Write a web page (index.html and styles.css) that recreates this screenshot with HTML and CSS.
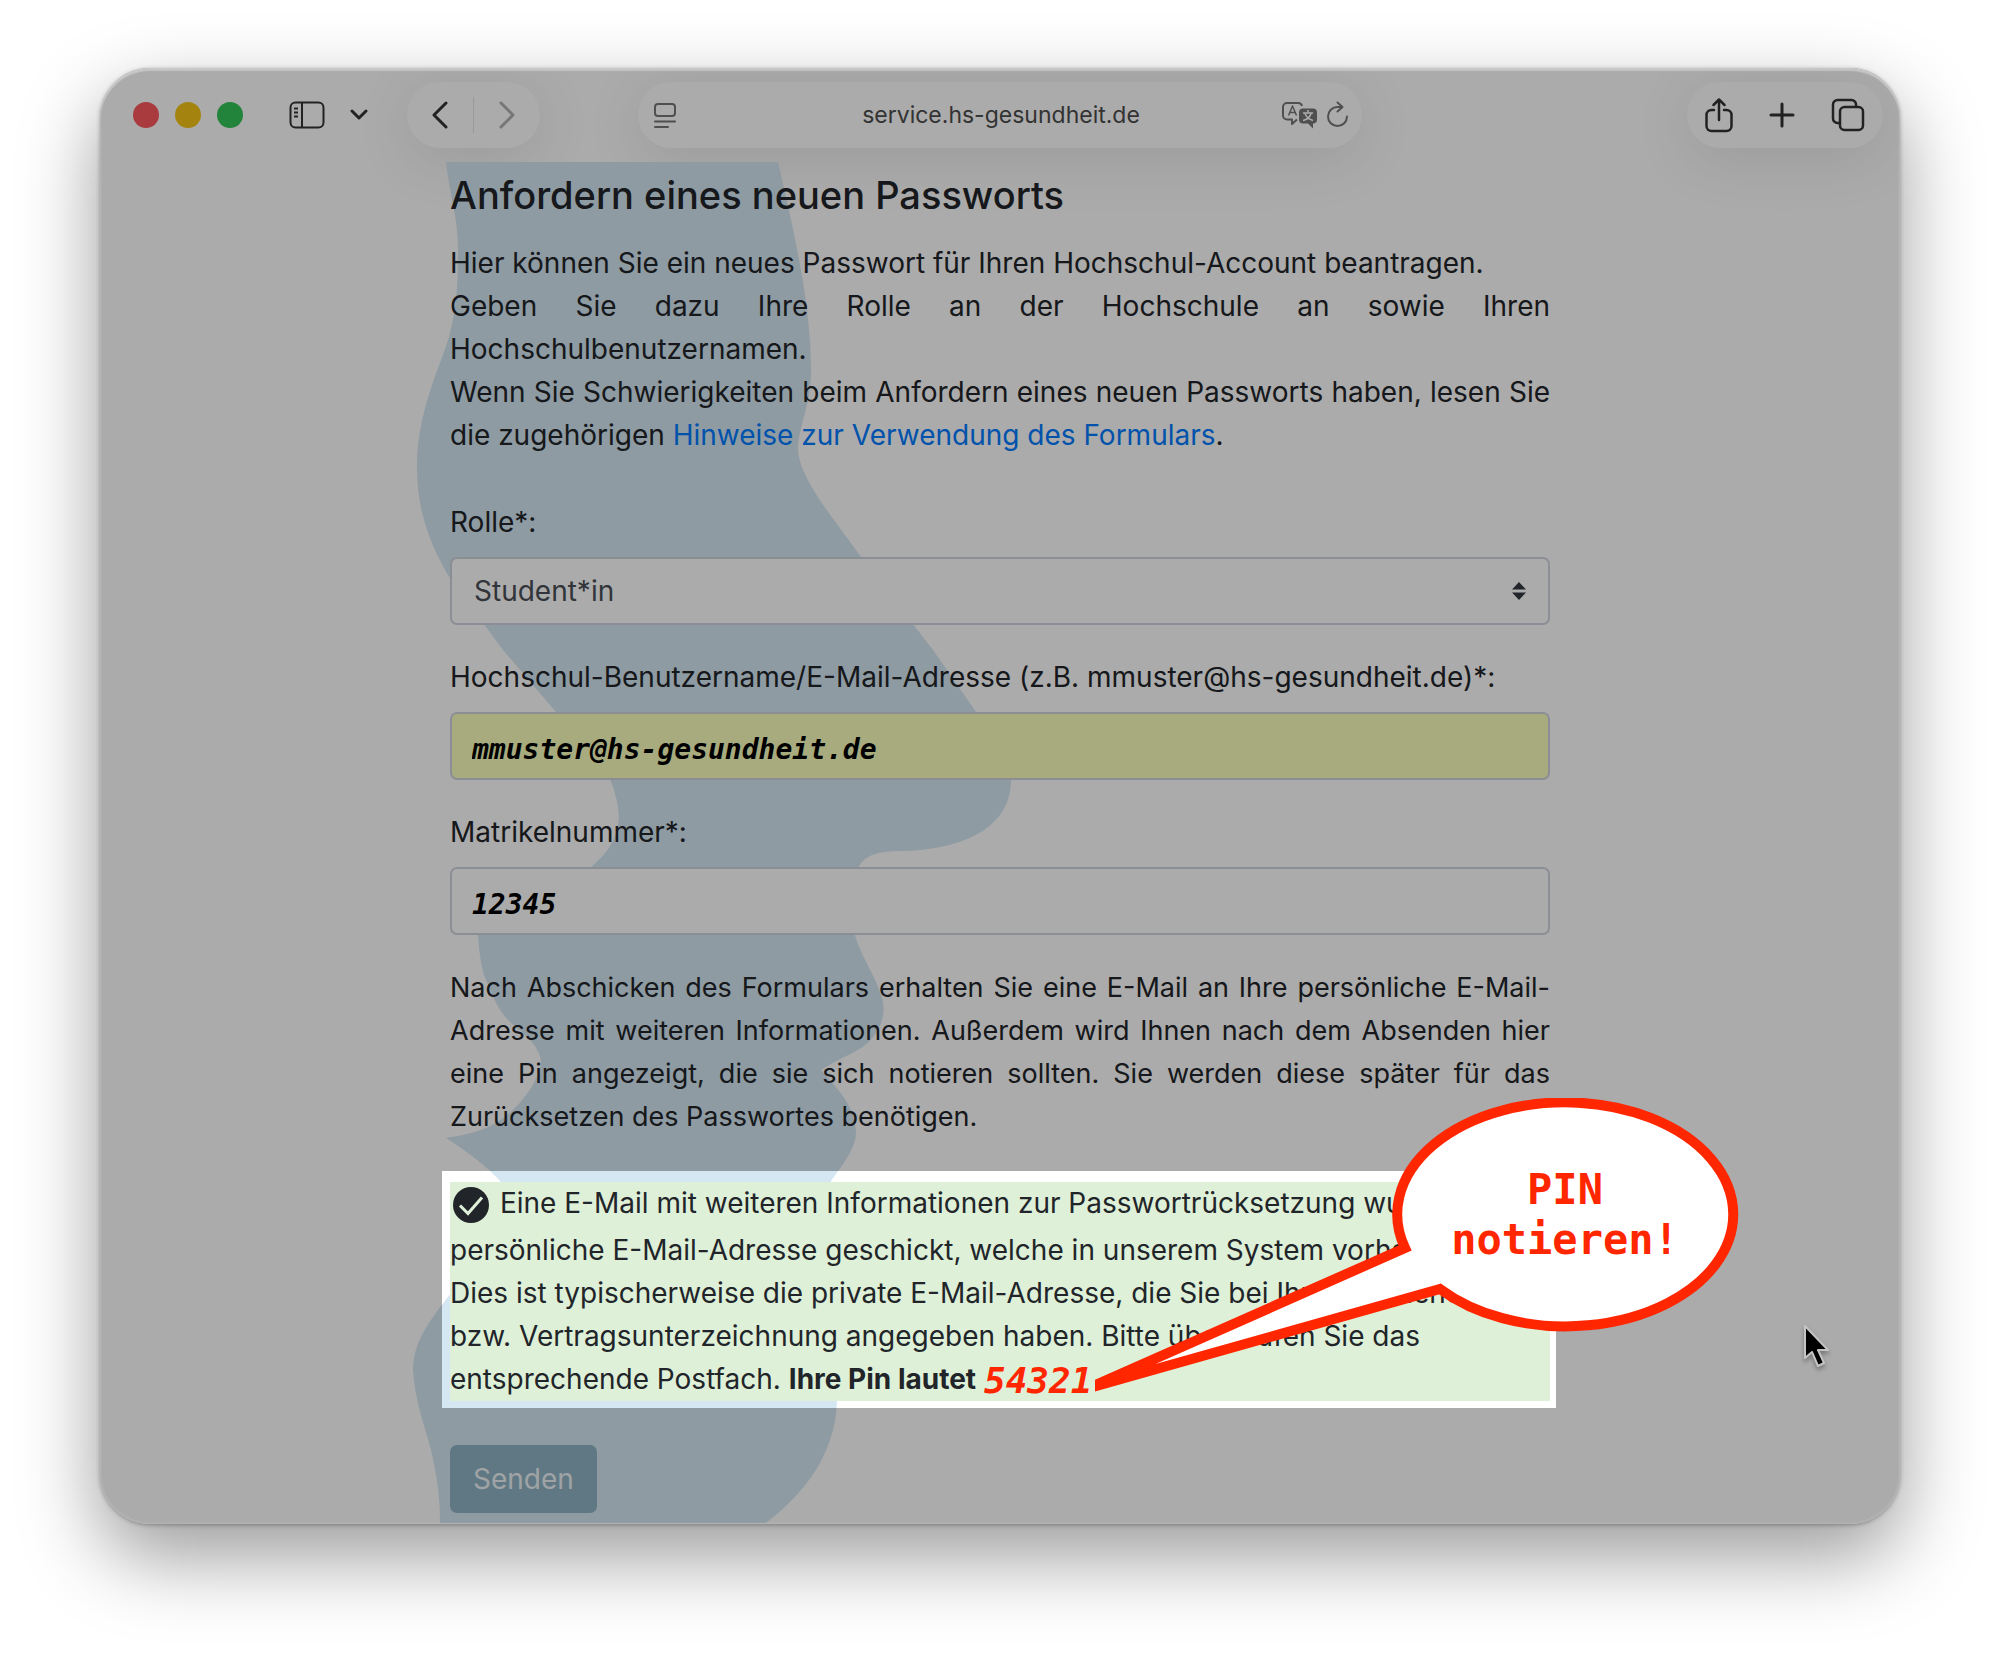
FILE: index.html
```html
<!DOCTYPE html>
<html lang="de">
  <head>
    <meta charset="UTF-8" />
    <meta name="viewport" content="width=device-width, initial-scale=1.0" />
    <title>Anfordern eines neuen Passworts</title>
    <link rel="stylesheet" href="styles.css">
  </head>
  <body>
    <div class="window">
      <header class="toolbar">
        <div class="toolbar-left">
          <div class="lights">
            <span class="light red"></span>
            <span class="light yellow"></span>
            <span class="light green"></span>
          </div>
          <button class="icon-btn sidebar-btn" aria-label="Seitenleiste">
            <svg width="36" height="28" viewBox="0 0 36 28" fill="none" stroke="currentColor" stroke-width="2">
              <rect x="1.5" y="1.5" width="33" height="25" rx="5" />
              <path d="M13 2v24M5 7.5h4M5 11.5h4M5 15.5h4" />
            </svg>
          </button>
          <button class="icon-btn menu-btn" aria-label="Tabgruppen">
            <svg width="18" height="12" viewBox="0 0 18 12" fill="none" stroke="currentColor" stroke-width="3" stroke-linecap="round" stroke-linejoin="round">
              <path d="M2 2l7 7 7-7" />
            </svg>
          </button>
          <div class="capsule nav">
            <button class="icon-btn" aria-label="Zurück">
              <svg width="18" height="28" viewBox="0 0 18 28" fill="none" stroke="currentColor" stroke-width="3" stroke-linecap="round" stroke-linejoin="round">
                <path d="M15 2L3 14l12 12" />
              </svg>
            </button>
            <span class="divider"></span>
            <button class="icon-btn muted" aria-label="Vorwärts">
              <svg width="18" height="28" viewBox="0 0 18 28" fill="none" stroke="currentColor" stroke-width="3" stroke-linecap="round" stroke-linejoin="round">
                <path d="M3 2l12 12L3 26" />
              </svg>
            </button>
          </div>
        </div>

        <div class="capsule address">
          <svg width="22" height="27" viewBox="0 0 22 27" fill="none" stroke="currentColor" stroke-width="2" stroke-linecap="round">
            <rect x="1" y="2" width="20" height="12" rx="3" />
            <path d="M1 19.500h20M1 25h13" />
          </svg>
          <input type="text" class="url" value="service.hs-gesundheit.de" aria-label="Adresse" />
          <div class="address-icons">
            <svg width="36" height="28" viewBox="0 0 36 28" fill="none" stroke="currentColor" stroke-width="2" stroke-linejoin="round">
              <path d="M15 18.500l-5 4.500v-4.500H5a4 4 0 0 1-4-4V6a4 4 0 0 1 4-4h11a4 4 0 0 1 4 3" />
              <path d="M6.500 14.500L10.500 5l4 9.500M8 11.500h5" stroke-width="1.500" />
              <path d="M21 7.500h10a4 4 0 0 1 4 4v7a4 4 0 0 1-4 4v5l-5-5h-5a4 4 0 0 1-4-4v-7a4 4 0 0 1 4-4z" fill="currentColor" stroke="none" />
              <path class="knockout" d="M26 9v3M21 12h10M23 12.500c1.500 4 4.500 6 8 7M29 12.500c-1 4-4 6-8 7" stroke-width="1.500" />
            </svg>
            <svg width="24" height="28" viewBox="0 0 24 28" fill="none" stroke="currentColor" stroke-width="2" stroke-linecap="round" stroke-linejoin="round">
              <path d="M21 15.500A9.500 9.500 0 1 1 11.500 6H16M11.500 1.500l5 4.500-5 4.500" />
            </svg>
          </div>
        </div>

        <div class="toolbar-right">
          <div class="capsule actions">
            <button class="icon-btn" aria-label="Teilen">
              <svg width="28" height="36" viewBox="0 0 28 36" fill="none" stroke="currentColor" stroke-width="2.500" stroke-linecap="round" stroke-linejoin="round">
                <path d="M9 13H6.500A5 5 0 0 0 1.500 18v11a5 5 0 0 0 5 5h15a5 5 0 0 0 5-5V18a5 5 0 0 0-5-5H19M14 23V3M8.500 8L14 2.500 19.500 8" />
              </svg>
            </button>
            <button class="icon-btn" aria-label="Neuer Tab">
              <svg width="26" height="26" viewBox="0 0 26 26" fill="none" stroke="currentColor" stroke-width="3" stroke-linecap="round">
                <path d="M13 2v22M2 13h22" />
              </svg>
            </button>
            <button class="icon-btn" aria-label="Tabübersicht">
              <svg width="34" height="34" viewBox="0 0 34 34" fill="none" stroke="currentColor" stroke-width="2.500">
                <path d="M9 25H6.500a4.500 4.500 0 0 1-4.500-4.500V6.500A4.500 4.500 0 0 1 6.500 2h14A4.500 4.500 0 0 1 25 6.500V9" />
                <rect x="9" y="9" width="23" height="23" rx="4.500" />
              </svg>
            </button>
          </div>
        </div>
      </header>

      <main class="content">
        <svg class="wave" viewBox="400 0 650 1361" width="650" height="1361" fill="#d4e7f3">
          <path d="M446 0C450 35 458 55 458 88C458 120 457 145 449 175C440 205 417 250 417 305C417 355 434 390 451 418L503 488L556 550C580 580 610 605 615 632C622 655 622 680 590 706L478 773C480 800 483 812 487 820C500 855 510 860 520 868C550 895 541 905 534 921C520 945 505 955 496 961C480 970 465 973 446 976C465 988 488 1005 500 1019L510 1060L451 1131C430 1158 413 1180 413 1208C415 1240 425 1265 431 1288C438 1320 440 1335 440 1361H766C806 1330 837 1290 837 1235L831 1019C845 1000 856 985 856 970C854 940 835 925 821 908C840 895 862 890 873 875C885 860 886 845 880 830C873 810 859 790 855 773L858 706C866 690 885 689 904 689C965 687 1011 665 1011 618L976 550L933 488L861 395C835 358 800 318 798 288C798 265 811 245 811 208C811 150 798 85 778 0z" />
        </svg>
        <form class="reset-form">
          <h1>Anfordern eines neuen Passworts</h1>
          <p class="intro">
            Hier können Sie ein neues Passwort für Ihren Hochschul-Account beantragen.<br />
            Geben Sie dazu Ihre Rolle an der Hochschule an sowie Ihren Hochschulbenutzernamen.<br />
            Wenn Sie Schwierigkeiten beim Anfordern eines neuen Passworts haben, lesen Sie die zugehörigen
            <a href="#hinweise">Hinweise zur Verwendung des Formulars</a>.
          </p>

          <div class="form-group">
            <label for="rolle">Rolle*:</label>
            <div class="select-wrap">
              <select id="rolle" class="form-control">
                <option>Student*in</option>
              </select>
              <svg class="select-arrow" width="14" height="18" viewBox="0 0 14 18" fill="#343a40">
                <path d="M0 7.500L7 0l7 7.500zM0 10.500h14L7 18z" />
              </svg>
            </div>
          </div>

          <div class="form-group">
            <label for="benutzer">Hochschul-Benutzername/E-Mail-Adresse (z.B. mmuster@hs-gesundheit.de)*:</label>
            <input type="text" id="benutzer" class="form-control typed autofill" value="mmuster@hs-gesundheit.de" />
          </div>

          <div class="form-group">
            <label for="matrikel">Matrikelnummer*:</label>
            <input type="text" id="matrikel" class="form-control typed" value="12345" />
          </div>

          <p class="info">
            Nach Abschicken des Formulars erhalten Sie eine E-Mail an Ihre persönliche E-Mail-Adresse mit weiteren
            Informationen. Außerdem wird Ihnen nach dem Absenden hier eine Pin angezeigt, die sie sich notieren sollten.
            Sie werden diese später für das Zurücksetzen des Passwortes benötigen.
          </p>

          <div class="result">
            <p>
              <svg class="check" width="42" height="36" viewBox="0 0 42 36">
                <circle cx="21" cy="18" r="18" fill="#212529" />
                <path d="M10 18.500l8 8 14-16" fill="none" stroke="#dff0d8" stroke-width="3" />
              </svg>
              Eine E-Mail mit weiteren Informationen zur Passwortrücksetzung wurde an die<br />
              persönliche E-Mail-Adresse geschickt, welche in unserem System vorhanden ist.<br />
              Dies ist typischerweise die private E-Mail-Adresse, die Sie bei Ihrer Studieneinschr.<br />
              bzw. Vertragsunterzeichnung angegeben haben. Bitte überprüfen Sie das<br />
              entsprechende Postfach. <strong>Ihre Pin lautet</strong> <span class="pin">54321</span>
            </p>
            <div class="callout">
              <svg width="648" height="294" viewBox="1095 1097 648 294" fill="#fff" stroke="#ff2600" stroke-width="10">
                <path d="M1405 1247A168 112 0 1 1 1440 1288L1089 1387z" />
              </svg>
              <p class="callout-text">PIN<br />notieren!</p>
            </div>
          </div>

          <button type="button" class="send-btn">Senden</button>
        </form>
      </main>

      <svg class="cursor" width="32" height="50" viewBox="0 0 32 50">
        <path d="M3 3v32l7-6 6 14 6-3-6-13h10z" fill="#000" stroke="#c4c4c4" stroke-width="2" stroke-linejoin="round" />
      </svg>
    </div>
  </body>
</html>
```
FILE: styles.css
```css
* {
  box-sizing: border-box;
}

body {
  margin: 0;
  padding: 68px 100px 130px;
  background-color: #fff;
  color: #212529;
  font-family: Inter, "Liberation Sans", sans-serif;
  font-size: 28px;
  line-height: 43px;
}

h1,
p {
  margin: 0;
}

/* Browser window */
.window {
  position: relative;
  border-radius: 50px;
  background-color: #ababab;
  box-shadow: 0 32px 80px rgba(0, 0, 0, 0.4), 0 1px 4px rgba(0, 0, 0, 0.3);
  overflow: hidden;
}

.window::before {
  content: "";
  position: absolute;
  inset: 0;
  background-color: #fff;
}

/* Light rim along the window edge */
.window::after {
  content: "";
  position: absolute;
  inset: 0;
  z-index: 3;
  border-radius: 50px;
  box-shadow: inset 0 3px 1px rgba(255, 255, 255, 0.3), inset 0 0 3px rgba(255, 255, 255, 0.3);
  pointer-events: none;
}

/* Toolbar */
.toolbar {
  position: relative;
  display: grid;
  grid-template-columns: 1fr minmax(0, 724px) 1fr;
  align-items: center;
  height: 94px;
  padding: 0 17px 0 33px;
}

.toolbar-left {
  display: flex;
  align-items: center;
}

.toolbar-right {
  display: flex;
  justify-content: flex-end;
}

.lights {
  display: flex;
  gap: 16px;
  margin-right: 46px;
}

.light {
  width: 26px;
  height: 26px;
  border-radius: 50%;
}

.red {
  background-color: #fc585e;
}

.yellow {
  background-color: #f5c416;
}

.green {
  background-color: #34c457;
}

.icon-btn {
  display: flex;
  padding: 0;
  border: none;
  background: none;
  color: #333;
  cursor: pointer;
}

.muted {
  color: #b0b0b0;
}

.sidebar-btn {
  margin-right: 25px;
}

.menu-btn {
  margin-right: 39px;
}

.capsule {
  display: flex;
  align-items: center;
  height: 66px;
  border-radius: 33px;
  background-color: #fff;
  box-shadow: 0 10px 60px rgba(0, 0, 0, 0.1);
}

.nav {
  gap: 24px;
  padding: 0 24px;
}

.divider {
  width: 1px;
  height: 36px;
  background-color: #e4e4e4;
}

.address {
  gap: 12px;
  padding: 0 12px 0 16px;
  margin-right: 8px;
  margin-left: -8px;
  color: #777;
}

.url {
  flex: 1;
  min-width: 0;
  padding: 0 0 0 44px;
  border: none;
  background: none;
  color: #4c4c4c;
  font-family: inherit;
  font-size: 23px;
  text-align: center;
}

.address-icons {
  display: flex;
  gap: 8px;
}

.knockout {
  stroke: #fff;
}

.actions {
  gap: 36px;
  padding: 0 18px;
}

/* Page */
.content {
  position: relative;
  padding: 7px 16px 11px;
}

.wave {
  position: absolute;
  top: 0;
  left: calc(50% - 600px);
}

.reset-form {
  position: relative;
  max-width: 1100px;
  margin: 0 auto;
}

h1 {
  margin-bottom: 21px;
  font-size: 38px;
  font-weight: 500;
  line-height: 52px;
}

.intro,
.info {
  margin-bottom: 44px;
  text-align: justify;
}

.info {
  font-size: 27px;
}

a {
  color: #007bff;
  text-decoration: none;
}

.form-group {
  margin-bottom: 31px;
}

label {
  display: block;
  margin-bottom: 13px;
}

.form-control {
  display: block;
  width: 100%;
  height: 68px;
  padding: 0 22px;
  border: 2px solid #d0d6de;
  border-radius: 7px;
  background-color: #fff;
  color: #495057;
  font-family: inherit;
  font-size: 28px;
  appearance: none;
}

.typed {
  padding: 6px 20px 0;
  color: #000;
  font-family: "DejaVu Sans Mono", monospace;
  font-weight: bold;
  font-style: italic;
}

.autofill {
  background-color: #faffbd;
}

.select-wrap {
  position: relative;
}

.select-arrow {
  position: absolute;
  top: 25px;
  right: 24px;
}

/* Result message, everything around it is dimmed */
.result {
  position: relative;
  z-index: 2;
  margin-bottom: 44px;
  background-color: #dff0d8;
}

.result::before {
  content: "";
  position: absolute;
  inset: -11px -6px -7px -8px;
  box-shadow: 0 0 0 3000px rgba(0, 0, 0, 0.33);
  pointer-events: none;
}

.check {
  margin-bottom: 6px;
  vertical-align: -16px;
}

.pin {
  color: #ff2600;
  font-family: "DejaVu Sans Mono", monospace;
  font-size: 36px;
  font-style: italic;
  font-weight: bold;
  line-height: 28px;
  vertical-align: -4px;
}

.callout {
  position: absolute;
  top: -84px;
  left: 645px;
}

.callout svg {
  display: block;
}

.callout-text {
  position: absolute;
  top: 67px;
  right: 10px;
  width: 336px;
  color: #ff2600;
  font-family: "DejaVu Sans Mono", monospace;
  font-size: 42px;
  font-weight: bold;
  line-height: 50px;
  text-align: center;
}

.send-btn {
  display: block;
  height: 68px;
  padding: 0 23px;
  border: none;
  border-radius: 7px;
  background-color: #8eb3c3;
  color: #eef4f7;
  font-family: inherit;
  font-size: 28px;
}

.cursor {
  position: absolute;
  right: 66px;
  bottom: 151px;
  z-index: 3;
  filter: drop-shadow(0 3px 2px rgba(0, 0, 0, 0.3));
}
```
